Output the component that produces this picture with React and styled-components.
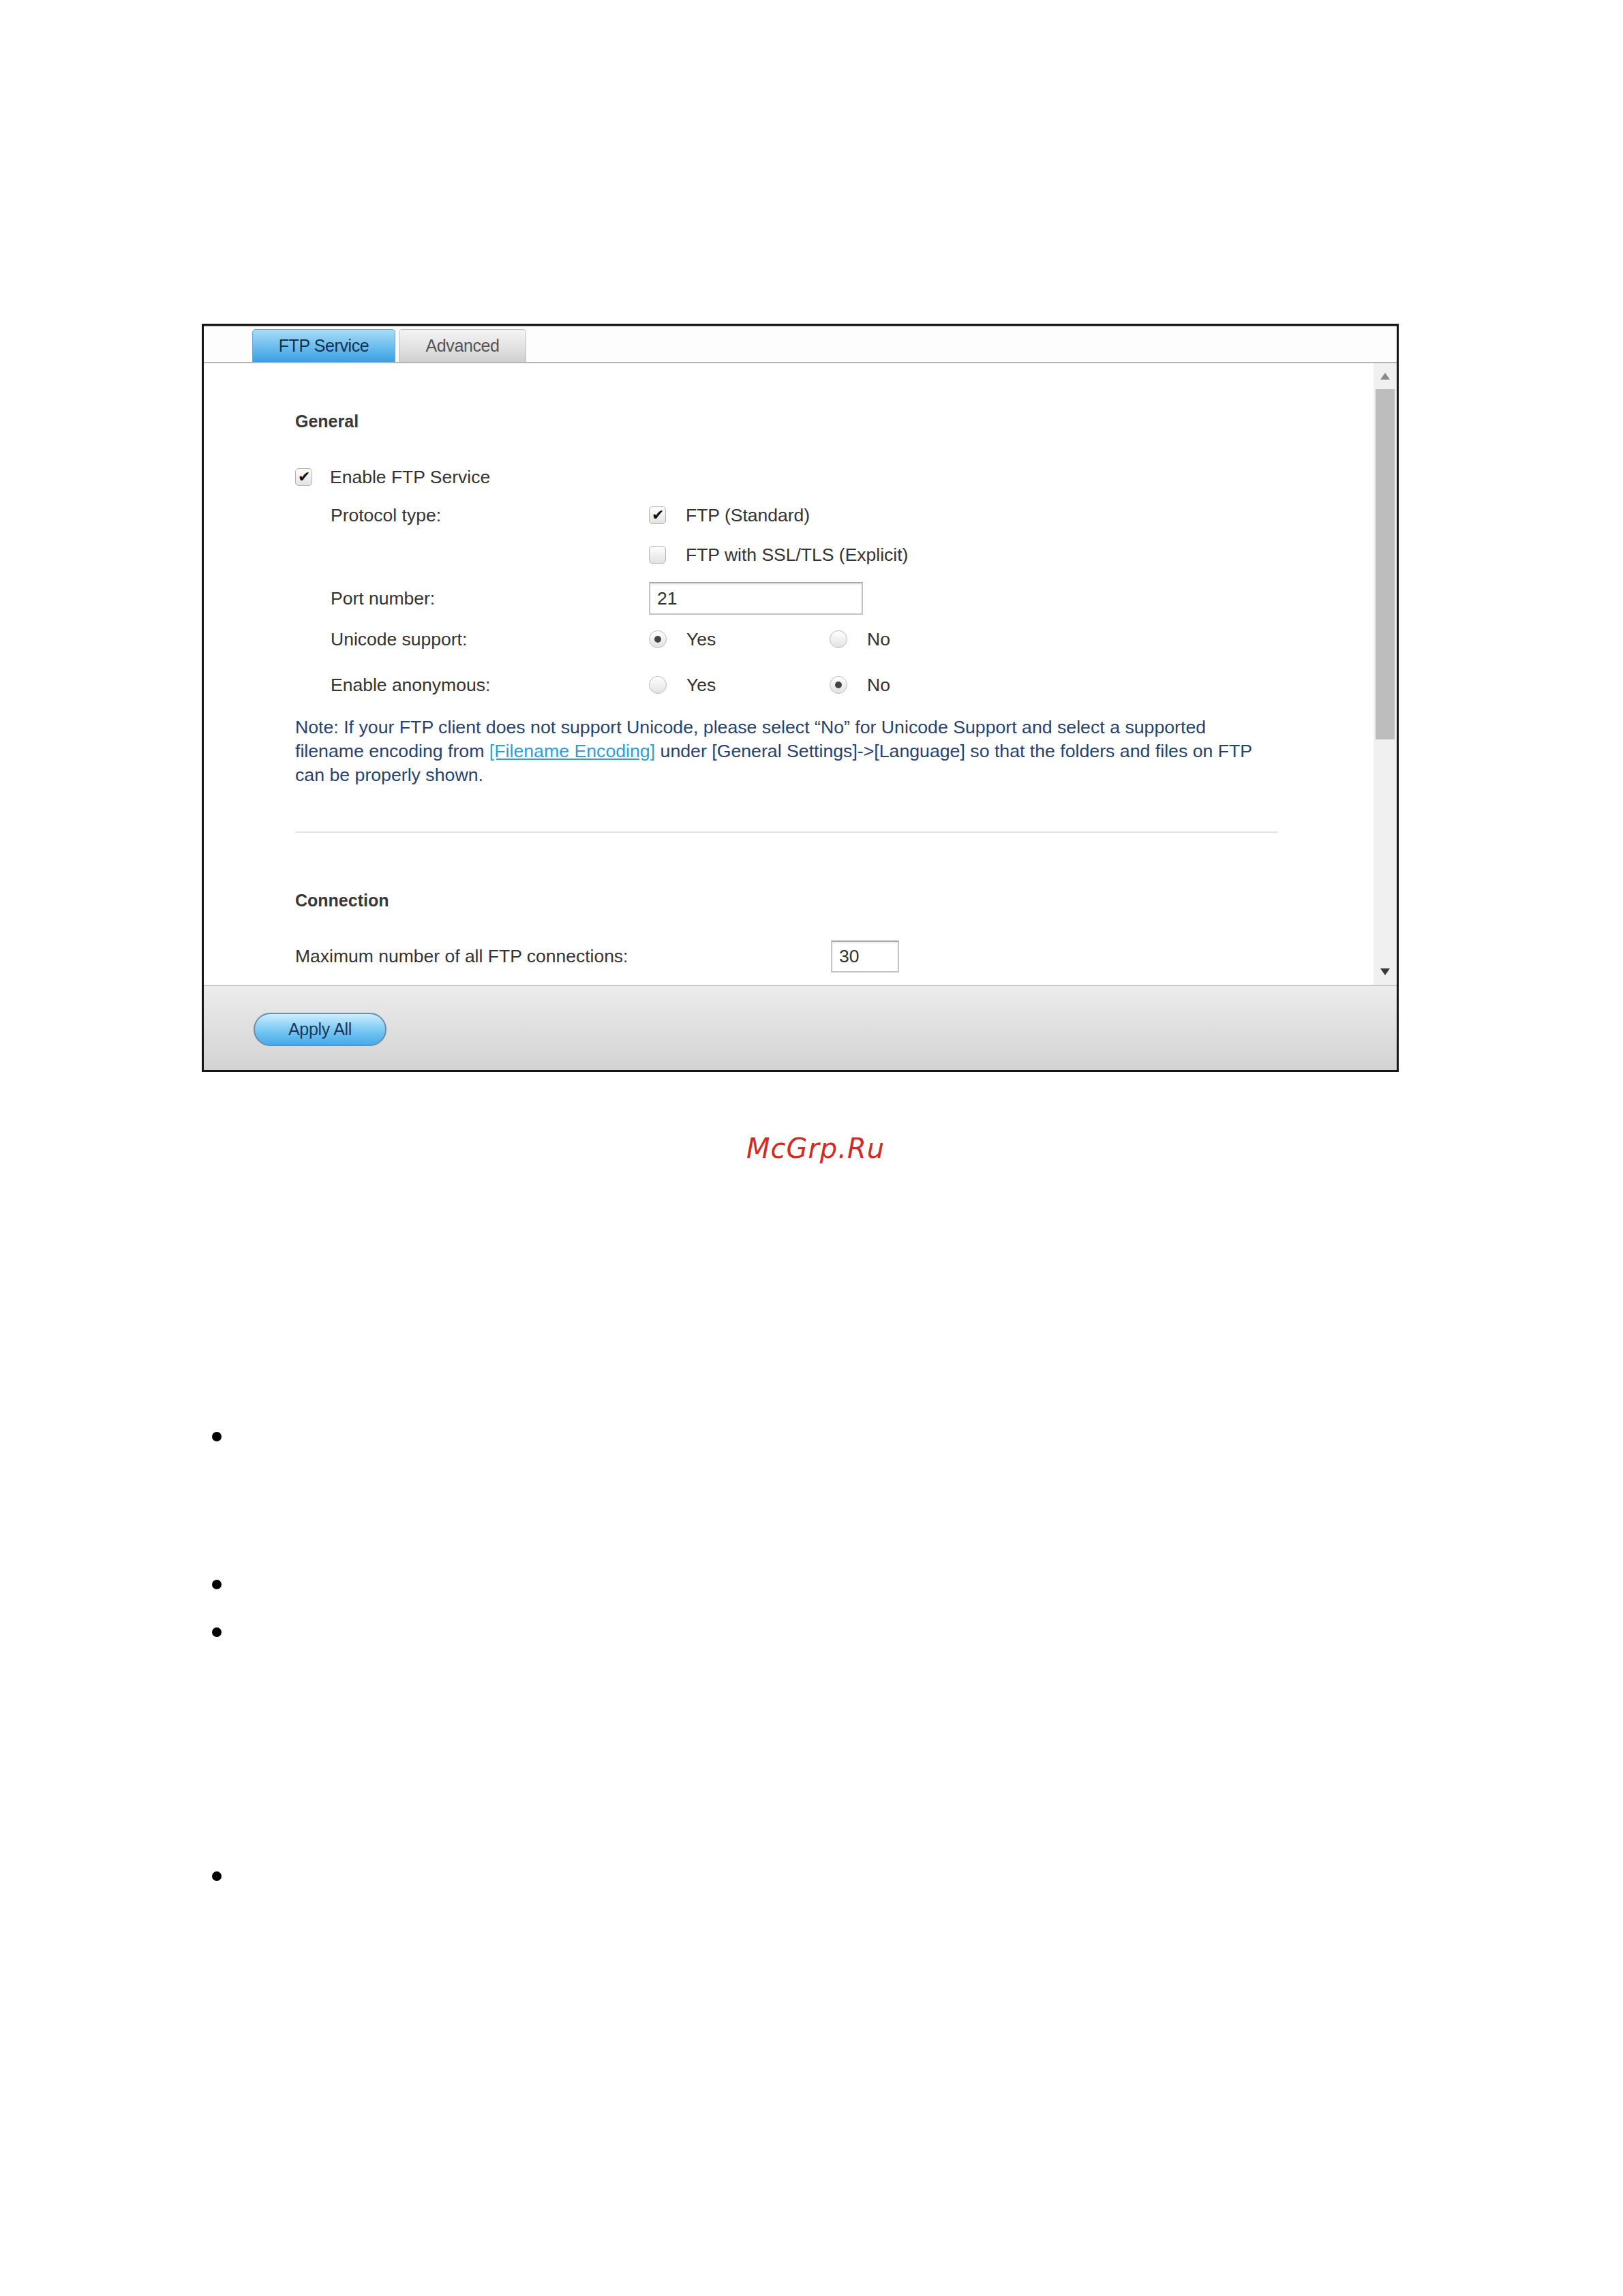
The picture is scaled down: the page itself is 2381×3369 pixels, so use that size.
import styled, { createGlobalStyle } from 'styled-components';

const GlobalStyle = createGlobalStyle`
  html, body {
    margin: 0;
    padding: 0;
    background: #ffffff;
  }
  body {
    font-family: "Liberation Sans", Arial, sans-serif;
  }
`;

const Page = styled.div`
  width: 2381px;
  height: 3369px;
  overflow: hidden;
  padding-top: 475px;
  box-sizing: border-box;
  position: relative;
`;

const Panel = styled.div`
  margin-left: 296px;
  width: 1756px;
  box-sizing: border-box;
  border: 3px solid #151515;
  background: #fff;
  display: flex;
  flex-direction: column;
`;

const TabBar = styled.div`
  height: 51px;
  border-top: 2px solid #d4d4d4;
  border-bottom: 2px solid #b4b4b4;
  display: flex;
  align-items: flex-end;
  gap: 5px;
  padding-left: 71px;
  background: #fdfdfd;
`;

const Tab = styled.div`
  height: 48px;
  width: ${({ $w }) => $w}px;
  box-sizing: border-box;
  border-radius: 5px 5px 0 0;
  display: flex;
  align-items: center;
  justify-content: center;
  font-size: 25px;
  letter-spacing: -0.4px;
  color: ${({ $active }) => ($active ? '#18304f' : '#555555')};
  background: ${({ $active }) =>
    $active
      ? 'linear-gradient(#a9dcf7, #62b9ec 60%, #3c9fe0)'
      : 'linear-gradient(#f4f4f4, #e0e0e0 60%, #cfcfcf)'};
  border: 1px solid ${({ $active }) => ($active ? '#67a9d6' : '#bdbdbd')};
  border-bottom: none;
`;

const Body = styled.div`
  height: 912px;
  display: flex;
`;

const Content = styled.div`
  flex: 1;
  overflow: hidden;
  padding: 65px 0 0 134px;
  color: #333333;
  font-size: 26.5px;
`;

const Heading = styled.div`
  font-size: 25px;
  font-weight: bold;
  line-height: 40px;
  color: #383838;
  margin-top: ${({ $mt }) => $mt || 0}px;
`;

const Row = styled.div`
  display: flex;
  align-items: center;
  height: ${({ $h }) => $h || 40}px;
  margin-top: ${({ $mt }) => $mt || 0}px;
  padding-left: ${({ $indent }) => ($indent ? 52 : 0)}px;
  white-space: nowrap;
`;

const Label = styled.div`
  width: ${({ $w }) => $w}px;
  flex-shrink: 0;
`;

const Option = styled.label`
  display: flex;
  align-items: center;
  gap: ${({ $gap }) => $gap || 29}px;
  width: ${({ $w }) => $w || 'auto'};
`;

const Box = styled.span`
  width: 25px;
  height: 26px;
  box-sizing: border-box;
  border: 1.5px solid #b5b5b5;
  border-radius: 5px;
  background: linear-gradient(#ffffff, #e2e2e2);
  display: inline-flex;
  align-items: center;
  justify-content: center;
  color: #111111;
  font-size: 22px;
  line-height: 1;
  flex-shrink: 0;
`;

const Radio = styled.span`
  width: 26px;
  height: 26px;
  box-sizing: border-box;
  border: 1.5px solid #bdbdbd;
  border-radius: 50%;
  background: linear-gradient(#ffffff, #e2e2e2);
  display: inline-flex;
  align-items: center;
  justify-content: center;
  flex-shrink: 0;

  &::after {
    content: '';
    width: 10px;
    height: 10px;
    border-radius: 50%;
    background: ${({ $on }) => ($on ? '#444444' : 'transparent')};
  }
`;

const TextInput = styled.div`
  width: ${({ $w }) => $w}px;
  height: ${({ $h }) => $h}px;
  box-sizing: border-box;
  border: 2px solid #c4c4c4;
  border-top-color: #a9a9a9;
  box-shadow: inset 0 2px 3px rgba(0, 0, 0, 0.08);
  background: #fff;
  display: flex;
  align-items: center;
  padding-left: 10px;
  font-size: 26.5px;
  color: #333;
`;

const Note = styled.p`
  margin: 25px 0 0;
  font-size: 26.7px;
  line-height: 35px;
  color: #27426f;
  white-space: nowrap;
`;

const Link = styled.a`
  color: #2a9fdc;
  text-decoration: underline;
`;

const Divider = styled.div`
  margin-top: 65px;
  width: 1442px;
  height: 2px;
  background: #e4e4e4;
`;

const Scrollbar = styled.div`
  width: 34px;
  background: #f0f0f0;
  display: flex;
  flex-direction: column;
  align-items: center;
`;

const Arrow = styled.div`
  height: 38px;
  display: flex;
  align-items: center;
  justify-content: center;
`;

const Track = styled.div`
  flex: 1;
  width: 100%;
  display: flex;
  justify-content: center;
`;

const Thumb = styled.div`
  width: 28px;
  height: 514px;
  background: #bdbdbd;
`;

const Footer = styled.div`
  height: 123px;
  border-top: 2px solid #c9c9c9;
  background: linear-gradient(#ececec, #d3d3d3);
  display: flex;
  align-items: center;
  padding-left: 73px;
`;

const ApplyButton = styled.button`
  width: 195px;
  height: 49px;
  border-radius: 25px;
  border: 2px solid #6d8eab;
  background: linear-gradient(#cdeeff, #7ccaf3 50%, #45aae8);
  font-family: "Liberation Sans", Arial, sans-serif;
  font-size: 25px;
  letter-spacing: -0.3px;
  color: #1c365c;
  padding: 0;
  margin-top: 4px;
`;

const Watermark = styled.div`
  margin-top: 88px;
  padding-left: 12px;
  text-align: center;
  font-family: "DejaVu Sans", sans-serif;
  font-style: italic;
  font-size: 40px;
  line-height: 48px;
  letter-spacing: 1px;
  color: #d42a24;
`;

const BulletList = styled.ul`
  list-style: none;
  margin: 0;
  padding: 0 0 0 311px;
`;

const Bullet = styled.li`
  width: 14px;
  height: 14px;
  border-radius: 50%;
  background: #000;
  margin-top: ${({ $mt }) => $mt}px;
`;

const Check = ({ on }) => <Box>{on ? '✔' : ''}</Box>;

const TriUp = ({ color }) => (
  <svg width="16" height="12" viewBox="0 0 16 12">
    <polygon points="8,1 15,11 1,11" fill={color} />
  </svg>
);

const TriDown = ({ color }) => (
  <svg width="16" height="12" viewBox="0 0 16 12">
    <polygon points="1,1 15,1 8,11" fill={color} />
  </svg>
);

const App = () => {
  return (
    <>
      <GlobalStyle />
      <Page>
        <Panel>
          <TabBar>
            <Tab $active $w={210}>FTP Service</Tab>
            <Tab $w={187}>Advanced</Tab>
          </TabBar>
          <Body>
            <Content>
              <Heading>General</Heading>
              <Row $mt={42}>
                <Option $gap={26}>
                  <Check on />
                  <span>Enable FTP Service</span>
                </Option>
              </Row>
              <Row $mt={16} $indent>
                <Label $w={467}>Protocol type:</Label>
                <Option>
                  <Check on />
                  <span>FTP (Standard)</span>
                </Option>
              </Row>
              <Row $mt={18} $indent>
                <Label $w={467} />
                <Option>
                  <Check />
                  <span>FTP with SSL/TLS (Explicit)</span>
                </Option>
              </Row>
              <Row $mt={20} $h={48} $indent>
                <Label $w={467}>Port number:</Label>
                <TextInput $w={314} $h={48}>21</TextInput>
              </Row>
              <Row $mt={16} $indent>
                <Label $w={467}>Unicode support:</Label>
                <Option $w="265px">
                  <Radio $on />
                  <span>Yes</span>
                </Option>
                <Option>
                  <Radio />
                  <span>No</span>
                </Option>
              </Row>
              <Row $mt={27} $indent>
                <Label $w={467}>Enable anonymous:</Label>
                <Option $w="265px">
                  <Radio />
                  <span>Yes</span>
                </Option>
                <Option>
                  <Radio $on />
                  <span>No</span>
                </Option>
              </Row>
              <Note>
                Note: If your FTP client does not support Unicode, please select “No” for Unicode Support and select a supported
                <br />
                filename encoding from <Link>[Filename Encoding]</Link> under [General Settings]-&gt;[Language] so that the folders and files on FTP
                <br />
                can be properly shown.
              </Note>
              <Divider />
              <Heading $mt={79}>Connection</Heading>
              <Row $mt={39} $h={47}>
                <Label $w={786}>Maximum number of all FTP connections:</Label>
                <TextInput $w={100} $h={47}>30</TextInput>
              </Row>
            </Content>
            <Scrollbar>
              <Arrow>
                <TriUp color="#8a8a8a" />
              </Arrow>
              <Track>
                <Thumb />
              </Track>
              <Arrow>
                <TriDown color="#3a3a3a" />
              </Arrow>
            </Scrollbar>
          </Body>
          <Footer>
            <ApplyButton>Apply All</ApplyButton>
          </Footer>
        </Panel>
        <Watermark>McGrp.Ru</Watermark>
        <BulletList>
          <Bullet $mt={392} />
          <Bullet $mt={203} />
          <Bullet $mt={56} />
          <Bullet $mt={344} />
        </BulletList>
      </Page>
    </>
  );
};

export default App;
